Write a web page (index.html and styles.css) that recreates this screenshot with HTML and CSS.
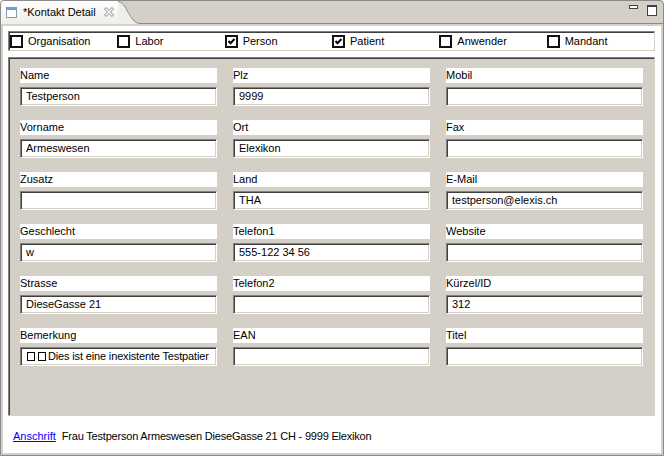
FILE: index.html
```html
<!DOCTYPE html>
<html lang="de">
<head>
<meta charset="utf-8">
<title>Kontakt Detail</title>
<link rel="stylesheet" href="styles.css">
</head>
<body>
<div class="view">
  <div class="tabbar">
    <div class="tab">
      <svg class="tab-icon" width="11" height="11" viewBox="0 0 11 11">
        <rect x="0.5" y="0.5" width="10" height="10" fill="#fff" stroke="#7f9db9"/>
        <rect x="1" y="1" width="9" height="2" fill="#6f9be0"/>
      </svg>
      <span class="tab-title">*Kontakt Detail</span>
      <svg class="tab-close" width="10" height="10" viewBox="0 0 10 10">
        <polygon points="0.5,2 2,0.5 5,3.5 8,0.5 9.5,2 6.5,5 9.5,8 8,9.5 5,6.5 2,9.5 0.5,8 3.5,5" fill="#fff" stroke="#8a8a8a" stroke-width="1"/>
      </svg>
    </div>
    <svg class="tab-curve" width="24" height="23" viewBox="0 0 24 23">
      <path d="M0,0 C9,0 11,22.5 22,22.5 L24,22.5 L24,23 L0,23 Z" fill="#efeeea"/>
      <path d="M0,0.5 C9,0.5 11,22.5 22,22.5 L24,22.5" fill="none" stroke="#8a8a8a"/>
    </svg>
    <div class="tabbar-rest">
      <svg class="btn-min" width="9" height="4" viewBox="0 0 9 4">
        <rect x="0.5" y="0.5" width="8" height="3" fill="#fff" stroke="#404040"/>
      </svg>
      <svg class="btn-max" width="10" height="11" viewBox="0 0 10 11">
        <rect x="0.5" y="0.5" width="9" height="10" fill="#fff" stroke="#404040"/>
        <rect x="0" y="0" width="10" height="2" fill="#404040"/>
      </svg>
    </div>
  </div>

  <div class="content">
    <div class="types">
      <label class="check"><span class="box"></span><span>Organisation</span></label>
      <label class="check"><span class="box"></span><span>Labor</span></label>
      <label class="check"><span class="box"><svg width="9" height="9" viewBox="0 0 9 9"><polyline points="1.5,4 3.5,6.2 7.5,2" fill="none" stroke="#000" stroke-width="2"/></svg></span><span>Person</span></label>
      <label class="check"><span class="box"><svg width="9" height="9" viewBox="0 0 9 9"><polyline points="1.5,4 3.5,6.2 7.5,2" fill="none" stroke="#000" stroke-width="2"/></svg></span><span>Patient</span></label>
      <label class="check"><span class="box"></span><span>Anwender</span></label>
      <label class="check"><span class="box"></span><span>Mandant</span></label>
    </div>

    <div class="group">
      <div class="field"><div class="flabel">Name</div><div class="finput">Testperson</div></div>
      <div class="field"><div class="flabel">Plz</div><div class="finput">9999</div></div>
      <div class="field"><div class="flabel">Mobil</div><div class="finput"></div></div>

      <div class="field"><div class="flabel">Vorname</div><div class="finput">Armeswesen</div></div>
      <div class="field"><div class="flabel">Ort</div><div class="finput">Elexikon</div></div>
      <div class="field"><div class="flabel">Fax</div><div class="finput"></div></div>

      <div class="field"><div class="flabel">Zusatz</div><div class="finput"></div></div>
      <div class="field"><div class="flabel">Land</div><div class="finput">THA</div></div>
      <div class="field"><div class="flabel">E-Mail</div><div class="finput">testperson@elexis.ch</div></div>

      <div class="field"><div class="flabel">Geschlecht</div><div class="finput">w</div></div>
      <div class="field"><div class="flabel">Telefon1</div><div class="finput">555-122 34 56</div></div>
      <div class="field"><div class="flabel">Website</div><div class="finput"></div></div>

      <div class="field"><div class="flabel">Strasse</div><div class="finput">DieseGasse 21</div></div>
      <div class="field"><div class="flabel">Telefon2</div><div class="finput"></div></div>
      <div class="field"><div class="flabel">Kürzel/ID</div><div class="finput">312</div></div>

      <div class="field"><div class="flabel">Bemerkung</div><div class="finput tight"><span class="tofu"></span><span class="tofu"></span>Dies ist eine inexistente Testpatier</div></div>
      <div class="field"><div class="flabel">EAN</div><div class="finput"></div></div>
      <div class="field"><div class="flabel">Titel</div><div class="finput"></div></div>
    </div>

    <div class="footer">
      <a class="link" href="#">Anschrift</a><span class="address">Frau Testperson Armeswesen DieseGasse 21 CH - 9999 Elexikon</span>
    </div>
  </div>
</div>
</body>
</html>
```

FILE: styles.css
```css
html, body {
  margin: 0;
  padding: 0;
  background: #ffffff;
}

body {
  font-family: "Liberation Sans", Arial, sans-serif;
  font-size: 11px;
  color: #000;
}

.view {
  width: 664px;
  height: 456px;
  box-sizing: border-box;
  border: 1px solid #8a8a8a;
  border-radius: 4px 4px 0 0;
  background: #d4d0c8;
  display: flex;
  flex-direction: column;
  overflow: hidden;
}

/* ---------- tab bar ---------- */
.tabbar {
  height: 23px;
  display: flex;
  flex: none;
}

.tab {
  display: flex;
  align-items: center;
  padding: 0 4px 0 5px;
  background: linear-gradient(to bottom, #ffffff, #efeeea);
  border-top-left-radius: 3px;
}

.tab-icon {
  display: block;
  margin-top: -1px;
}

.tab-title {
  margin-left: 6px;
  line-height: 13px;
  white-space: nowrap;
}

.tab-close {
  display: block;
  margin-left: 8px;
  margin-top: -1px;
}

.tab-curve {
  display: block;
  flex: none;
}

.tabbar-rest {
  flex: 1;
  box-sizing: border-box;
  border-bottom: 1px solid #8a8a8a;
  display: flex;
  justify-content: flex-end;
  align-items: flex-start;
  padding: 4px 6px 0 0;
}

.btn-min {
  display: block;
  margin-right: 9px;
}

.btn-max {
  display: block;
}

/* ---------- content ---------- */
.content {
  flex: 1;
  border: 2px solid #d4d0c8;
  background: #fff;
  padding: 5px 0 0 5px;
  min-height: 0;
}

.types {
  width: 647px;
  height: 20px;
  box-sizing: border-box;
  border: 1px solid;
  border-color: #808080 #d4d0c8 #d4d0c8 #808080;
  box-shadow: inset 1px 1px 0 #404040;
  display: grid;
  grid-template-columns: repeat(6, 1fr);
  align-items: center;
  padding-left: 1px;
  margin-bottom: 6px;
}

.check {
  display: flex;
  align-items: center;
  gap: 5px;
  white-space: nowrap;
  line-height: 13px;
}

.box {
  width: 13px;
  height: 13px;
  box-sizing: border-box;
  border: 2px solid #111;
  background: #fff;
  display: flex;
  align-items: center;
  justify-content: center;
  flex: none;
}

.box svg {
  display: block;
}

.group {
  width: 647px;
  height: 359px;
  box-sizing: border-box;
  border: 1px solid;
  border-color: #808080 #d4d0c8 #d4d0c8 #808080;
  box-shadow: inset 1px 1px 0 #404040;
  background: #d4d0c8;
  padding: 10px 0 0 11px;
  display: grid;
  grid-template-columns: 197px 197px 197px;
  column-gap: 16px;
  row-gap: 14px;
  align-content: start;
}

.field {
  display: flex;
  flex-direction: column;
}

.flabel {
  height: 15px;
  line-height: 15px;
  background: #fff;
  white-space: nowrap;
}

.finput {
  margin-top: 4px;
  height: 19px;
  box-sizing: border-box;
  border: 1px solid;
  border-color: #808080 #ffffff #ffffff #808080;
  box-shadow: inset 1px 1px 0 #404040, inset -1px -1px 0 #d4d0c8;
  background: #fff;
  padding: 0 4px 0 5px;
  line-height: 17px;
  white-space: nowrap;
  overflow: hidden;
}

.finput.tight {
  letter-spacing: -0.15px;
}

.tofu {
  display: inline-block;
  width: 8px;
  height: 9px;
  box-sizing: border-box;
  border: 1px solid #000;
  margin: 0 2px 0 1px;
  vertical-align: -1px;
}

.footer {
  margin-top: 14px;
  padding-left: 5px;
  line-height: 13px;
  white-space: nowrap;
}

.link {
  color: #0000ff;
  text-decoration: underline;
  padding-right: 1px;
}

.address {
  margin-left: 5px;
  letter-spacing: -0.2px;
}
```
